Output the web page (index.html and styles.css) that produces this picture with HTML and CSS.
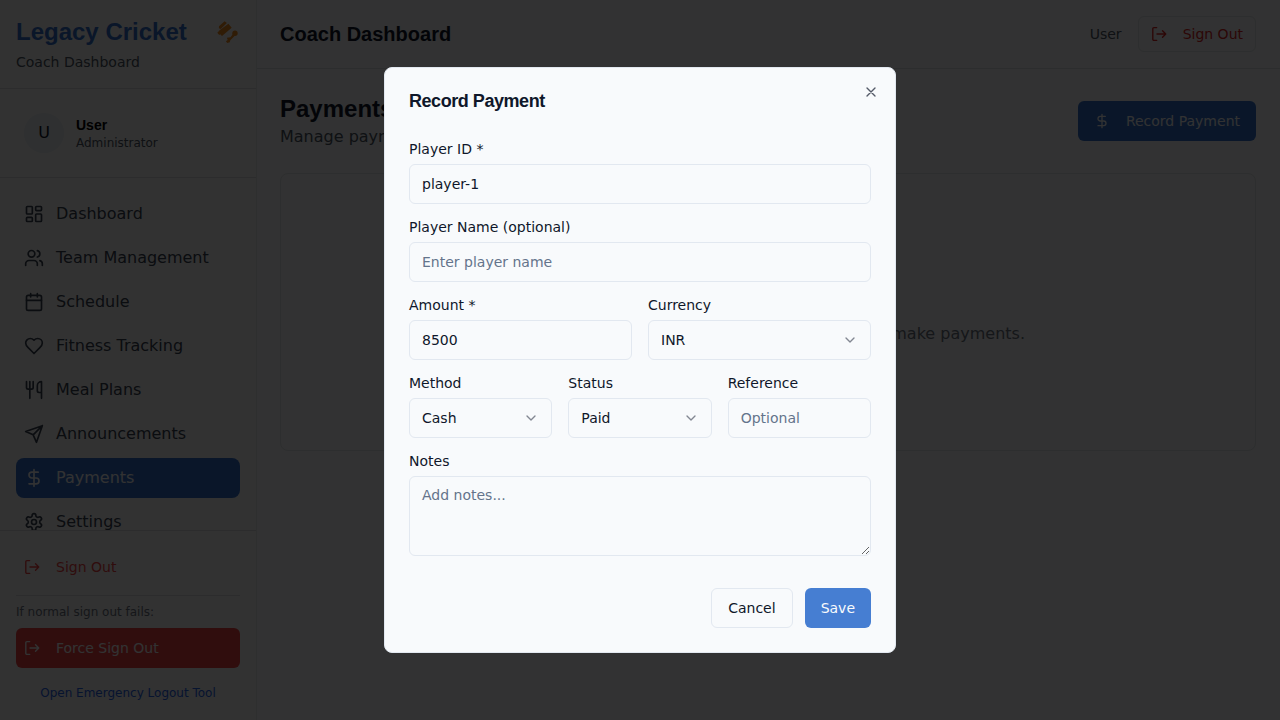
FILE: index.html
```html
<!DOCTYPE html>
<html lang="en">
<head>
<meta charset="utf-8">
<title>Legacy Cricket - Payments</title>
<link rel="stylesheet" href="styles.css">
</head>
<body>
<svg class="sprite" aria-hidden="true">
  <symbol id="exit" viewBox="0 0 24 24"><path d="M8.500 2.400H4.300a1.600 1.600 0 0 0-1.600 1.600v16a1.600 1.600 0 0 0 1.600 1.600H8.500M9 12h13M17.300 7.200l4.800 4.800-4.800 4.800"/></symbol>
  <symbol id="dollar" viewBox="0 0 24 24"><path d="M12 2v20M17 5H9.500a3.500 3.500 0 0 0 0 7h5a3.500 3.500 0 0 1 0 7H6"/></symbol>
  <symbol id="chevron" viewBox="0 0 24 24"><path d="m6 9 6 6 6-6"/></symbol>
</svg>
<div class="app">
  <aside class="sidebar">
    <div class="brand">
      <div class="brand-row">
        <h1>Legacy Cricket</h1>
        <svg class="brand-icon" viewBox="0 0 24 24"><path d="M3 6.200 8.600 1.200l2.300 1.900L4.700 9 2.900 8.200Z"/><path d="M3.600 10.200 12.400 3.800 15.700 7.800 6 16 4.200 14.300 3.200 15 1.300 12.800 2.300 11.700Z"/><circle cx="19" cy="13.300" r="2.700"/><path d="M17.300 13.500 19.300 15.300 14.300 20.200 13.800 22.300 11.200 23 9.900 21.200 11.700 19.900 10.900 17.700 14.500 17.300Z"/></svg>
      </div>
      <p>Coach Dashboard</p>
    </div>
    <div class="profile">
      <span class="avatar">U</span>
      <div><strong>User</strong><small>Administrator</small></div>
    </div>
    <nav class="nav">
      <a><svg class="icon" viewBox="0 0 24 24"><rect x="3" y="3" width="7" height="9" rx="1"/><rect x="14" y="3" width="7" height="5" rx="1"/><rect x="14" y="12" width="7" height="9" rx="1"/><rect x="3" y="16" width="7" height="5" rx="1"/></svg>Dashboard</a>
      <a><svg class="icon" viewBox="0 0 24 24"><path d="M16 21v-2a4 4 0 0 0-4-4H6a4 4 0 0 0-4 4v2M22 21v-2a4 4 0 0 0-3-3.870M16 3.130a4 4 0 0 1 0 7.750"/><circle cx="9" cy="7" r="4"/></svg>Team Management</a>
      <a><svg class="icon" viewBox="0 0 24 24"><path d="M8 2v4M16 2v4M3 10h18"/><rect x="3" y="4" width="18" height="18" rx="2"/></svg>Schedule</a>
      <a><svg class="icon" viewBox="0 0 24 24"><path d="M19 14c1.490-1.460 3-3.210 3-5.500A5.500 5.500 0 0 0 16.500 3c-1.760 0-3 .5-4.500 2-1.500-1.500-2.740-2-4.500-2A5.500 5.500 0 0 0 2 8.500c0 2.300 1.500 4.050 3 5.500l7 7Z"/></svg>Fitness Tracking</a>
      <a><svg class="icon" viewBox="0 0 24 24"><path d="M3 2v7c0 1.100.9 2 2 2h4a2 2 0 0 0 2-2V2M7 2v20M21 15V2a5 5 0 0 0-5 5v6c0 1.100.9 2 2 2h3Zm0 0v7"/></svg>Meal Plans</a>
      <a><svg class="icon" viewBox="0 0 24 24"><path d="m22 2-7 20-4-9-9-4ZM22 2 11 13"/></svg>Announcements</a>
      <a class="active"><svg class="icon"><use href="#dollar"/></svg>Payments</a>
      <a><svg class="icon" viewBox="0 0 24 24"><path d="M12.220 2h-.44a2 2 0 0 0-2 2v.18a2 2 0 0 1-1 1.730l-.43.25a2 2 0 0 1-2 0l-.15-.08a2 2 0 0 0-2.730.73l-.22.38a2 2 0 0 0 .73 2.730l.15.1a2 2 0 0 1 1 1.720v.51a2 2 0 0 1-1 1.740l-.15.09a2 2 0 0 0-.73 2.730l.22.38a2 2 0 0 0 2.730.73l.15-.08a2 2 0 0 1 2 0l.43.25a2 2 0 0 1 1 1.730V20a2 2 0 0 0 2 2h.44a2 2 0 0 0 2-2v-.18a2 2 0 0 1 1-1.730l.43-.25a2 2 0 0 1 2 0l.15.08a2 2 0 0 0 2.730-.73l.22-.39a2 2 0 0 0-.73-2.730l-.15-.08a2 2 0 0 1-1-1.740v-.5a2 2 0 0 1 1-1.740l.15-.09a2 2 0 0 0 .73-2.730l-.22-.38a2 2 0 0 0-2.730-.73l-.15.08a2 2 0 0 1-2 0l-.43-.25a2 2 0 0 1-1-1.730V4a2 2 0 0 0-2-2z"/><circle cx="12" cy="12" r="3"/></svg>Settings</a>
    </nav>
    <div class="side-foot">
      <a class="side-out"><svg class="icon small exit"><use href="#exit"/></svg>Sign Out</a>
      <div class="force">
        <p>If normal sign out fails:</p>
        <a class="side-out danger"><svg class="icon small exit"><use href="#exit"/></svg>Force Sign Out</a>
      </div>
      <a class="emergency">Open Emergency Logout Tool</a>
    </div>
  </aside>
  <div class="page">
    <header class="topbar">
      <h2>Coach Dashboard</h2>
      <div class="account"><span>User</span><a class="top-out"><svg class="icon small exit"><use href="#exit"/></svg>Sign Out</a></div>
    </header>
    <main class="content">
      <div class="heading">
        <div><h2>Payments</h2><p>Manage payments and fees</p></div>
        <a class="record"><svg class="icon small"><use href="#dollar"/></svg>Record Payment</a>
      </div>
      <section class="panel"><p>Select a player to view any payment history or make payments.</p></section>
    </main>
  </div>
</div>
<div class="overlay">
  <form class="dialog">
    <svg class="icon close" viewBox="0 0 24 24"><path d="M18 6 6 18M6 6l12 12"/></svg>
    <h2>Record Payment</h2>
    <div class="fields">
      <label>Player ID *<input value="player-1"></label>
      <label>Player Name (optional)<input placeholder="Enter player name"></label>
      <div class="cols two">
        <label>Amount *<input value="8500"></label>
        <label>Currency<span class="select">INR<svg class="icon small"><use href="#chevron"/></svg></span></label>
      </div>
      <div class="cols three">
        <label>Method<span class="select">Cash<svg class="icon small"><use href="#chevron"/></svg></span></label>
        <label>Status<span class="select">Paid<svg class="icon small"><use href="#chevron"/></svg></span></label>
        <label>Reference<input placeholder="Optional"></label>
      </div>
      <label>Notes<textarea placeholder="Add notes..."></textarea></label>
    </div>
    <div class="actions"><button type="button" class="btn outline">Cancel</button><button type="button" class="btn primary">Save</button></div>
  </form>
</div>
</body>
</html>
```

FILE: styles.css
```css
* { box-sizing: border-box; margin: 0; }
body { font: 16px/24px "DejaVu Sans", sans-serif; color: #0f172a; background: #f8fafc; height: 720px; overflow: hidden; }
h1, h2, strong { font-family: "Liberation Sans", Arial, sans-serif; font-weight: 700; }
.sprite { position: absolute; width: 0; height: 0; }
.icon { width: 20px; height: 20px; flex: none; fill: none; stroke: currentColor; stroke-width: 2; stroke-linecap: round; stroke-linejoin: round; }
.icon.small { width: 16px; height: 16px; }
.icon.exit { stroke-width: 2.1; }
.app { display: flex; height: 720px; }
.sidebar { width: 257px; flex: none; display: flex; flex-direction: column; border-right: 1px solid #e7e9ec; background: #fafafa; }
.brand { height: 89px; padding: 16px; border-bottom: 1px solid #d9dde2; }
.brand-row { display: flex; align-items: center; justify-content: space-between; height: 32px; }
.brand h1 { font-size: 24px; line-height: 32px; color: #3270ce; }
.brand-icon { width: 24px; height: 24px; fill: #ee8b22; }
.brand p { font-size: 14px; line-height: 20px; margin-top: 4px; color: #4b5563; }
.profile { height: 89px; padding: 0 24px; display: flex; align-items: center; gap: 12px; border-bottom: 1px solid #d9dde2; }
.avatar { width: 40px; height: 40px; border-radius: 50%; background: #e8edf3; display: flex; align-items: center; justify-content: center; }
.profile strong { display: block; font-size: 14px; line-height: 20px; color: #000; }
.profile small { display: block; font-size: 12px; line-height: 16px; color: #4b5563; }
.nav { flex: 1; min-height: 0; overflow: hidden; padding: 16px; display: flex; flex-direction: column; gap: 4px; }
.nav a { height: 40px; flex: none; padding: 0 8px; display: flex; align-items: center; gap: 12px; border-radius: 8px; color: #374151; }
.nav .active { background: #3270ce; color: #f8fafc; }
.side-foot { height: 190px; padding: 16px 16px 0; border-top: 1px solid #d9dde2; }
.side-out { height: 40px; padding: 0 8px; display: flex; align-items: center; gap: 16px; border-radius: 6px; font-size: 14px; color: #ef4444; }
.force { margin-top: 8px; padding-top: 8px; border-top: 1px solid #d9dde2; }
.force p { font-size: 12px; line-height: 16px; margin-bottom: 8px; color: #6b7280; }
.side-out.danger { background: #ef4444; color: #f8fafc; }
.emergency { display: block; margin-top: 17px; font-size: 12px; line-height: 16px; text-align: center; color: #2563eb; }
.page { flex: 1; min-width: 0; }
.topbar { height: 69px; padding: 0 24px 0 23px; display: flex; align-items: center; justify-content: space-between; border-bottom: 1px solid #dde0e5; }
.topbar h2 { font-size: 20px; line-height: 28px; }
.account { display: flex; align-items: center; gap: 16px; font-size: 14px; color: #4b5563; }
.top-out { height: 36px; display: flex; align-items: center; gap: 16px; padding: 0 12px; border: 1px solid #dfe3e9; border-radius: 6px; color: #dc2626; }
.content { padding: 24px 24px 0 23px; }
.heading { display: flex; align-items: center; justify-content: space-between; height: 56px; }
.heading h2 { font-size: 24px; line-height: 32px; }
.heading p { color: #4b5563; }
.record { height: 40px; padding: 0 16px; display: flex; align-items: center; gap: 16px; border-radius: 6px; background: #3270ce; color: #f8fafc; font-size: 14px; }
.panel { height: 278px; margin-top: 24px; border: 1px solid #e1e4ea; border-radius: 8px; display: flex; justify-content: center; padding-top: 148px; color: #6b7280; }
.overlay { position: fixed; inset: 0; background: rgba(0, 0, 0, .8); display: flex; align-items: center; justify-content: center; }
.dialog { position: relative; width: 512px; height: 586px; padding: 24px; border: 1px solid #e2e8f0; border-radius: 8px; background: #f8fafc; }
.dialog h2 { font-size: 18px; line-height: 18px; letter-spacing: -.45px; }
.close { position: absolute; width: 16px; height: 16px; right: 16px; top: 16px; opacity: .7; }
.fields { display: flex; flex-direction: column; gap: 12px; margin-top: 28px; }
.dialog label { display: flex; flex-direction: column; min-width: 0; font-size: 14px; line-height: 22px; }
.cols { display: grid; gap: 16px; }
.two { grid-template-columns: repeat(2, minmax(0, 1fr)); }
.three { grid-template-columns: repeat(3, minmax(0, 1fr)); }
.dialog input, .select, .dialog textarea { display: flex; align-items: center; width: 100%; height: 40px; margin-top: 4px; padding: 8px 12px; border: 1px solid #e2e8f0; border-radius: 6px; background: #f8fafc; color: #0f172a; font: 14px/20px "DejaVu Sans", sans-serif; }
.dialog textarea { display: block; height: 80px; }
::placeholder { color: #64748b; opacity: 1; }
.select { justify-content: space-between; }
.select svg { opacity: .5; }
.actions { display: flex; justify-content: flex-end; gap: 12px; margin-top: 32px; }
.btn { height: 40px; padding: 0 16px; border: 0; border-radius: 6px; font: 14px/20px "DejaVu Sans", sans-serif; }
.outline { border: 1px solid #e2e8f0; background: #f8fafc; color: #0f172a; }
.primary { background: #467ed2; color: #f8fafc; }
```
